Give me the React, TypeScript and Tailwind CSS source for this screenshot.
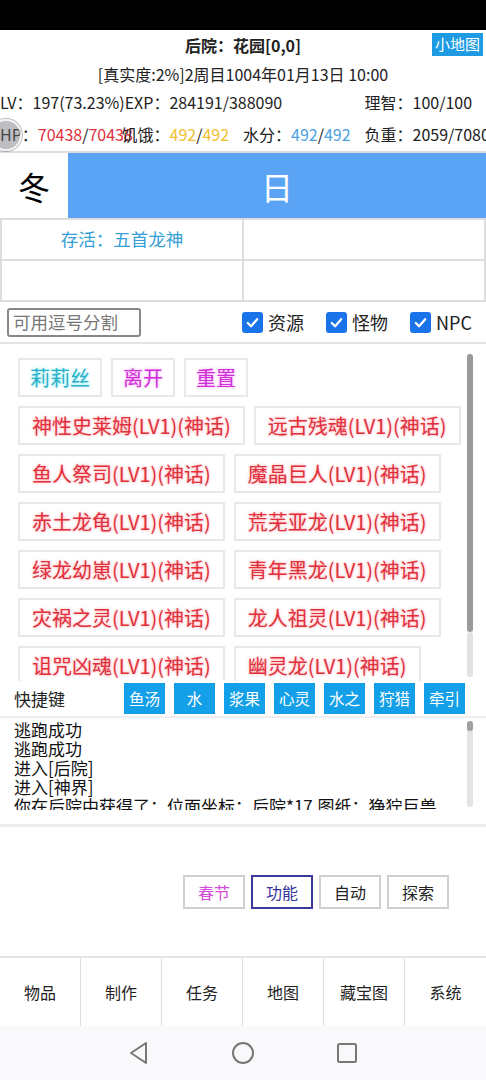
import React from "react";

const F = { fontFamily: '"Noto Sans CJK SC", "Noto Sans", sans-serif' };

const monsters: [string, string][] = [
  ["神性史莱姆(LV1)(神话)", "远古残魂(LV1)(神话)"],
  ["鱼人祭司(LV1)(神话)", "魔晶巨人(LV1)(神话)"],
  ["赤土龙龟(LV1)(神话)", "荒芜亚龙(LV1)(神话)"],
  ["绿龙幼崽(LV1)(神话)", "青年黑龙(LV1)(神话)"],
  ["灾祸之灵(LV1)(神话)", "龙人祖灵(LV1)(神话)"],
  ["诅咒凶魂(LV1)(神话)", "幽灵龙(LV1)(神话)"],
];

const quick = ["鱼汤", "水", "浆果", "心灵", "水之", "狩猎", "牵引"];
const nav = ["物品", "制作", "任务", "地图", "藏宝图", "系统"];

function Check({ label }: { label: string }) {
  return (
    <div className="flex items-center gap-[5px]">
      <div className="w-[21px] h-[21px] rounded-[3px] bg-[#1a73e8] flex items-center justify-center">
        <svg width="15" height="15" viewBox="0 0 16 16">
          <path d="M3 8.5 L6.5 12 L13 4.5" fill="none" stroke="white" strokeWidth="2.4" strokeLinecap="round" strokeLinejoin="round" />
        </svg>
      </div>
      <span className="text-[18px] text-[#222]">{label}</span>
    </div>
  );
}

function MBtn({ t }: { t: string }) {
  return (
    <div className="border-2 border-[#e8e8e8] h-[39px] px-[12px] flex items-center text-[20px] text-[#e0303c] [text-shadow:0_0_3px_rgba(255,80,90,0.55)] whitespace-nowrap">
      {t}
    </div>
  );
}

export default function App() {
  return (
    <div style={F} className="w-[486px] h-[1080px] bg-white flex flex-col overflow-hidden relative text-[#222]">
      <div className="h-[30px] bg-black shrink-0" />
      {/* header */}
      <div className="relative h-[30px] flex items-center justify-center shrink-0">
        <span className="text-[16px] font-bold">后院：花园[0,0]</span>
        <div className="absolute right-[3px] top-[3px] h-[23px] px-[3px] bg-[#1e9be3] text-white text-[15px] flex items-center">小地图</div>
      </div>
      <div className="h-[27px] flex items-center justify-center text-[16px] shrink-0">[真实度:2%]2周目1004年01月13日 10:00</div>
      <div className="h-[30px] grid grid-cols-4 items-center text-[16px] whitespace-nowrap shrink-0">
        <div className="col-span-3 overflow-visible">LV：197(73.23%)EXP：284191/388090</div>
        <div>理智：100/100</div>
      </div>
      <div className="h-[34px] grid grid-cols-4 items-center text-[16px] whitespace-nowrap shrink-0 relative">
        <div className="overflow-visible">HP：<span className="text-[#e0303c]">70438</span>/<span className="text-[#e0303c]">70438</span></div>
        <div>饥饿：<span className="text-[#f0c030]">492</span>/<span className="text-[#f0c030]">492</span></div>
        <div>水分：<span className="text-[#4a9fe0]">492</span>/<span className="text-[#4a9fe0]">492</span></div>
        <div>负重：2059/7080</div>
        <div className="absolute left-[-10px] top-[2px] w-[32px] h-[32px] rounded-full bg-[rgba(110,110,120,0.45)] border-2 border-[rgba(255,255,255,0.8)] shadow-[0_0_0_1px_rgba(120,120,120,0.5)]" />
      </div>
      {/* season */}
      <div className="h-[67px] flex border-t-2 border-[#ddd] shrink-0">
        <div className="w-[68px] flex items-center justify-center text-[32px] text-black">冬</div>
        <div className="flex-1 bg-[#5aa3f5] flex items-center justify-center text-[32px] text-white">日</div>
      </div>
      {/* grid */}
      <div className="grid grid-cols-2 border-t-2 border-l-2 border-[#ddd] shrink-0">
        <div className="h-[41px] border-r-2 border-b-2 border-[#ddd] flex items-center justify-center text-[17.5px] text-[#35a0d5]">存活：五首龙神</div>
        <div className="h-[41px] border-r-2 border-b-2 border-[#ddd]" />
        <div className="h-[41px] border-r-2 border-b-2 border-[#ddd]" />
        <div className="h-[41px] border-r-2 border-b-2 border-[#ddd]" />
      </div>
      {/* filter */}
      <div className="h-[42px] flex items-center border-b-2 border-[#e4e4e4] shrink-0 pl-[7px] pr-[14px]">
        <div className="w-[134px] h-[29px] border-2 border-[#888] rounded-[3px] flex items-center px-[4px] text-[17.5px] text-[#777] whitespace-nowrap overflow-hidden">可用逗号分割</div>
        <div className="flex-1 flex justify-end gap-[22px]">
          <Check label="资源" />
          <Check label="怪物" />
          <Check label="NPC" />
        </div>
      </div>
      {/* monsters */}
      <div className="h-[337px] shrink-0 relative overflow-hidden">
        <div className="flex flex-col gap-[9px] pl-[18px] pt-[14px]">
          <div className="flex gap-[9px]">
            <div className="border-2 border-[#e8e8e8] h-[39px] px-[10px] flex items-center text-[20px] text-[#28b0c8] [text-shadow:0_0_3px_rgba(60,220,240,0.6)]">莉莉丝</div>
            <div className="border-2 border-[#e8e8e8] h-[39px] px-[10px] flex items-center text-[20px] text-[#d030d8] [text-shadow:0_0_3px_rgba(240,80,240,0.55)]">离开</div>
            <div className="border-2 border-[#e8e8e8] h-[39px] px-[10px] flex items-center text-[20px] text-[#d030d8] [text-shadow:0_0_3px_rgba(240,80,240,0.55)]">重置</div>
          </div>
          {monsters.map((r, i) => (
            <div key={i} className="flex gap-[9px]">
              <MBtn t={r[0]} />
              <MBtn t={r[1]} />
            </div>
          ))}
        </div>
        <div className="absolute right-[13px] top-[10px] w-[6px] h-[278px] rounded-full bg-[#9a9a9a]" />
        <div className="absolute right-[13px] top-[288px] w-[6px] h-[45px] rounded-full bg-[#e2e2e2]" />
      </div>
      {/* quick keys */}
      <div className="h-[37px] flex items-center shrink-0 pl-[14px] border-b-2 border-[#eee]">
        <span className="text-[17px] w-[110px]">快捷键</span>
        <div className="flex gap-[9px]">
          {quick.map((q) => (
            <div key={q} className="w-[41px] h-[31px] bg-[#14a0e8] text-white text-[15.5px] flex items-center justify-center">{q}</div>
          ))}
        </div>
      </div>
      {/* log */}
      <div className="h-[92px] shrink-0 relative overflow-hidden pl-[14px] pt-[2px] text-[17px] leading-[19px] text-[#111]">
        <div>逃跑成功</div>
        <div>逃跑成功</div>
        <div>进入[后院]</div>
        <div>进入[神界]</div>
        <div className="whitespace-nowrap">你在后院中获得了：位面坐标：后院*17,图纸：狰狞巨兽</div>
        <div className="absolute right-[13px] top-[3px] w-[6px] h-[86px] rounded-full bg-[#e4e4e4]" />
        <div className="absolute right-[13px] top-[3px] w-[6px] h-[10px] rounded-full bg-[#a0a0a0]" />
      </div>
      <div className="h-[14px] shrink-0" />
      <div className="h-[3px] bg-[#ececec] shrink-0" />
      {/* bottom buttons */}
      <div className="h-[131px] shrink-0 flex items-center justify-end pr-[37px] gap-[6px] border-b-2 border-[#e4e4e4]">
        <div className="w-[62px] h-[34px] border-2 border-[#d0d0d0] flex items-center justify-center text-[16px] text-[#d84ad8]">春节</div>
        <div className="w-[62px] h-[34px] border-2 border-[#3a3a9c] flex items-center justify-center text-[16px] text-[#33339a]">功能</div>
        <div className="w-[62px] h-[34px] border-2 border-[#d0d0d0] flex items-center justify-center text-[16px] text-[#222]">自动</div>
        <div className="w-[62px] h-[34px] border-2 border-[#d0d0d0] flex items-center justify-center text-[16px] text-[#222]">探索</div>
      </div>
      {/* nav */}
      <div className="h-[68px] shrink-0 grid grid-cols-6">
        {nav.map((n, i) => (
          <div key={n} className={"flex items-center justify-center text-[16px] text-[#222] " + (i < 5 ? "border-r border-[#ddd]" : "")}>{n}</div>
        ))}
      </div>
      {/* android bar */}
      <div className="flex-1 bg-[#f9f8fb] flex items-center justify-center gap-[81px]">
        <svg width="22" height="24" viewBox="0 0 22 24">
          <path d="M18 2 L3 12 L18 22 Z" fill="none" stroke="#777" strokeWidth="2" strokeLinejoin="round" />
        </svg>
        <svg width="24" height="24" viewBox="0 0 24 24">
          <circle cx="12" cy="12" r="10" fill="none" stroke="#777" strokeWidth="2" />
        </svg>
        <svg width="22" height="22" viewBox="0 0 22 22">
          <rect x="2" y="2" width="18" height="18" rx="1.5" fill="none" stroke="#777" strokeWidth="2" />
        </svg>
      </div>
    </div>
  );
}
